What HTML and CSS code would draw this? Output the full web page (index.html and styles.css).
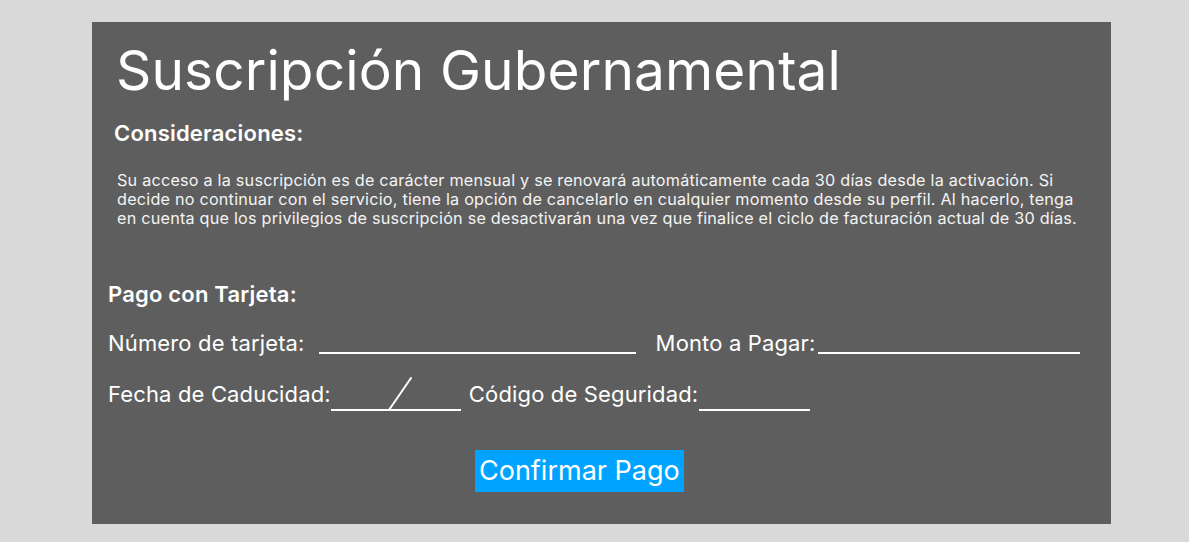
FILE: index.html
```html
<!DOCTYPE html>
<html lang="es">
<head>
<meta charset="utf-8">
<title>Suscripción Gubernamental</title>
<link rel="stylesheet" href="styles.css">
</head>
<body>
<main class="panel">
  <h1 class="title">Suscripción Gubernamental</h1>
  <h2 class="section-heading">Consideraciones:</h2>
  <p class="terms">Su acceso a la suscripción es de carácter mensual y se renovará automáticamente cada 30 días desde la activación. Si<br>decide no continuar con el servicio, tiene la opción de cancelarlo en cualquier momento desde su perfil. Al hacerlo, tenga<br>en cuenta que los privilegios de suscripción se desactivarán una vez que finalice el ciclo de facturación actual de 30 días.</p>
  <h2 class="pay-heading">Pago con Tarjeta:</h2>
  <div class="form-row row-one">
    <span class="label">Número de tarjeta:</span>
    <span class="field field-card"></span>
    <span class="label label-amount">Monto a Pagar:</span>
    <span class="field field-amount"></span>
  </div>
  <div class="form-row row-two">
    <span class="label">Fecha de Caducidad:</span>
    <span class="field field-date"><svg class="slash" width="26" height="34" viewBox="0 0 26 34"><line x1="2" y1="33" x2="24" y2="1" stroke="#fff" stroke-width="2" stroke-linecap="round"/></svg></span>
    <span class="label label-code">Código de Seguridad:</span>
    <span class="field field-code"></span>
  </div>
  <button class="confirm">Confirmar Pago</button>
</main>
</body>
</html>
```

FILE: styles.css
```css
html, body {
  margin: 0;
  padding: 0;
}
body {
  background: #d9d9d9;
  width: 1189px;
  height: 542px;
  overflow: hidden;
  font-family: Inter, "Noto Sans", sans-serif;
  color: #fff;
}
.panel {
  box-sizing: border-box;
  width: 1019px;
  height: 502px;
  margin: 22px 0 0 92px;
  padding-top: 15px;
  background: #5e5e5e;
  display: flex;
  flex-direction: column;
  align-items: flex-start;
}
.title {
  margin: 0 0 0 24px;
  font-size: 55px;
  line-height: 66px;
  font-weight: 400;
  letter-spacing: 0.12px;
}
.section-heading {
  margin: 17px 0 0 22px;
  font-size: 22px;
  line-height: 26px;
  font-weight: 600;
  letter-spacing: 0.2px;
}
.terms {
  margin: 25px 0 0 25px;
  width: 990px;
  white-space: nowrap;
  font-size: 16.2px;
  line-height: 19px;
  letter-spacing: 0.22px;
  color: #f4f4f4;
}
.pay-heading {
  margin: 53px 0 0 16px;
  font-size: 22px;
  line-height: 26px;
  font-weight: 600;
  letter-spacing: 0.2px;
}
.form-row {
  display: flex;
  align-items: flex-end;
  margin-left: 16px;
  font-size: 22px;
  line-height: 26px;
  letter-spacing: 0.15px;
}
.row-one {
  margin-top: 23px;
}
.row-two {
  margin-top: 25px;
}
.field {
  display: block;
  height: 2px;
  background: #fff;
  position: relative;
}
.row-one .field {
  margin-bottom: 2px;
}
.row-two .field {
  margin-bottom: -4px;
}
.field-card {
  width: 317px;
  margin-left: 14px;
}
.label-amount {
  margin-left: 20px;
}
.field-amount {
  width: 262px;
  margin-left: 2px;
}
.field-date {
  width: 130px;
  margin-left: 0;
}
.slash {
  position: absolute;
  left: 56px;
  bottom: 0;
}
.label-code {
  margin-left: 8px;
}
.field-code {
  width: 111px;
  margin-left: 1px;
}
.confirm {
  margin: 43px 0 0 383px;
  height: 42px;
  padding: 0 4px;
  border: 0;
  border-radius: 0;
  background: #00a3ff;
  color: #fff;
  font-family: Inter, "Noto Sans", sans-serif;
  font-size: 27px;
  line-height: 42px;
  cursor: pointer;
}
```
